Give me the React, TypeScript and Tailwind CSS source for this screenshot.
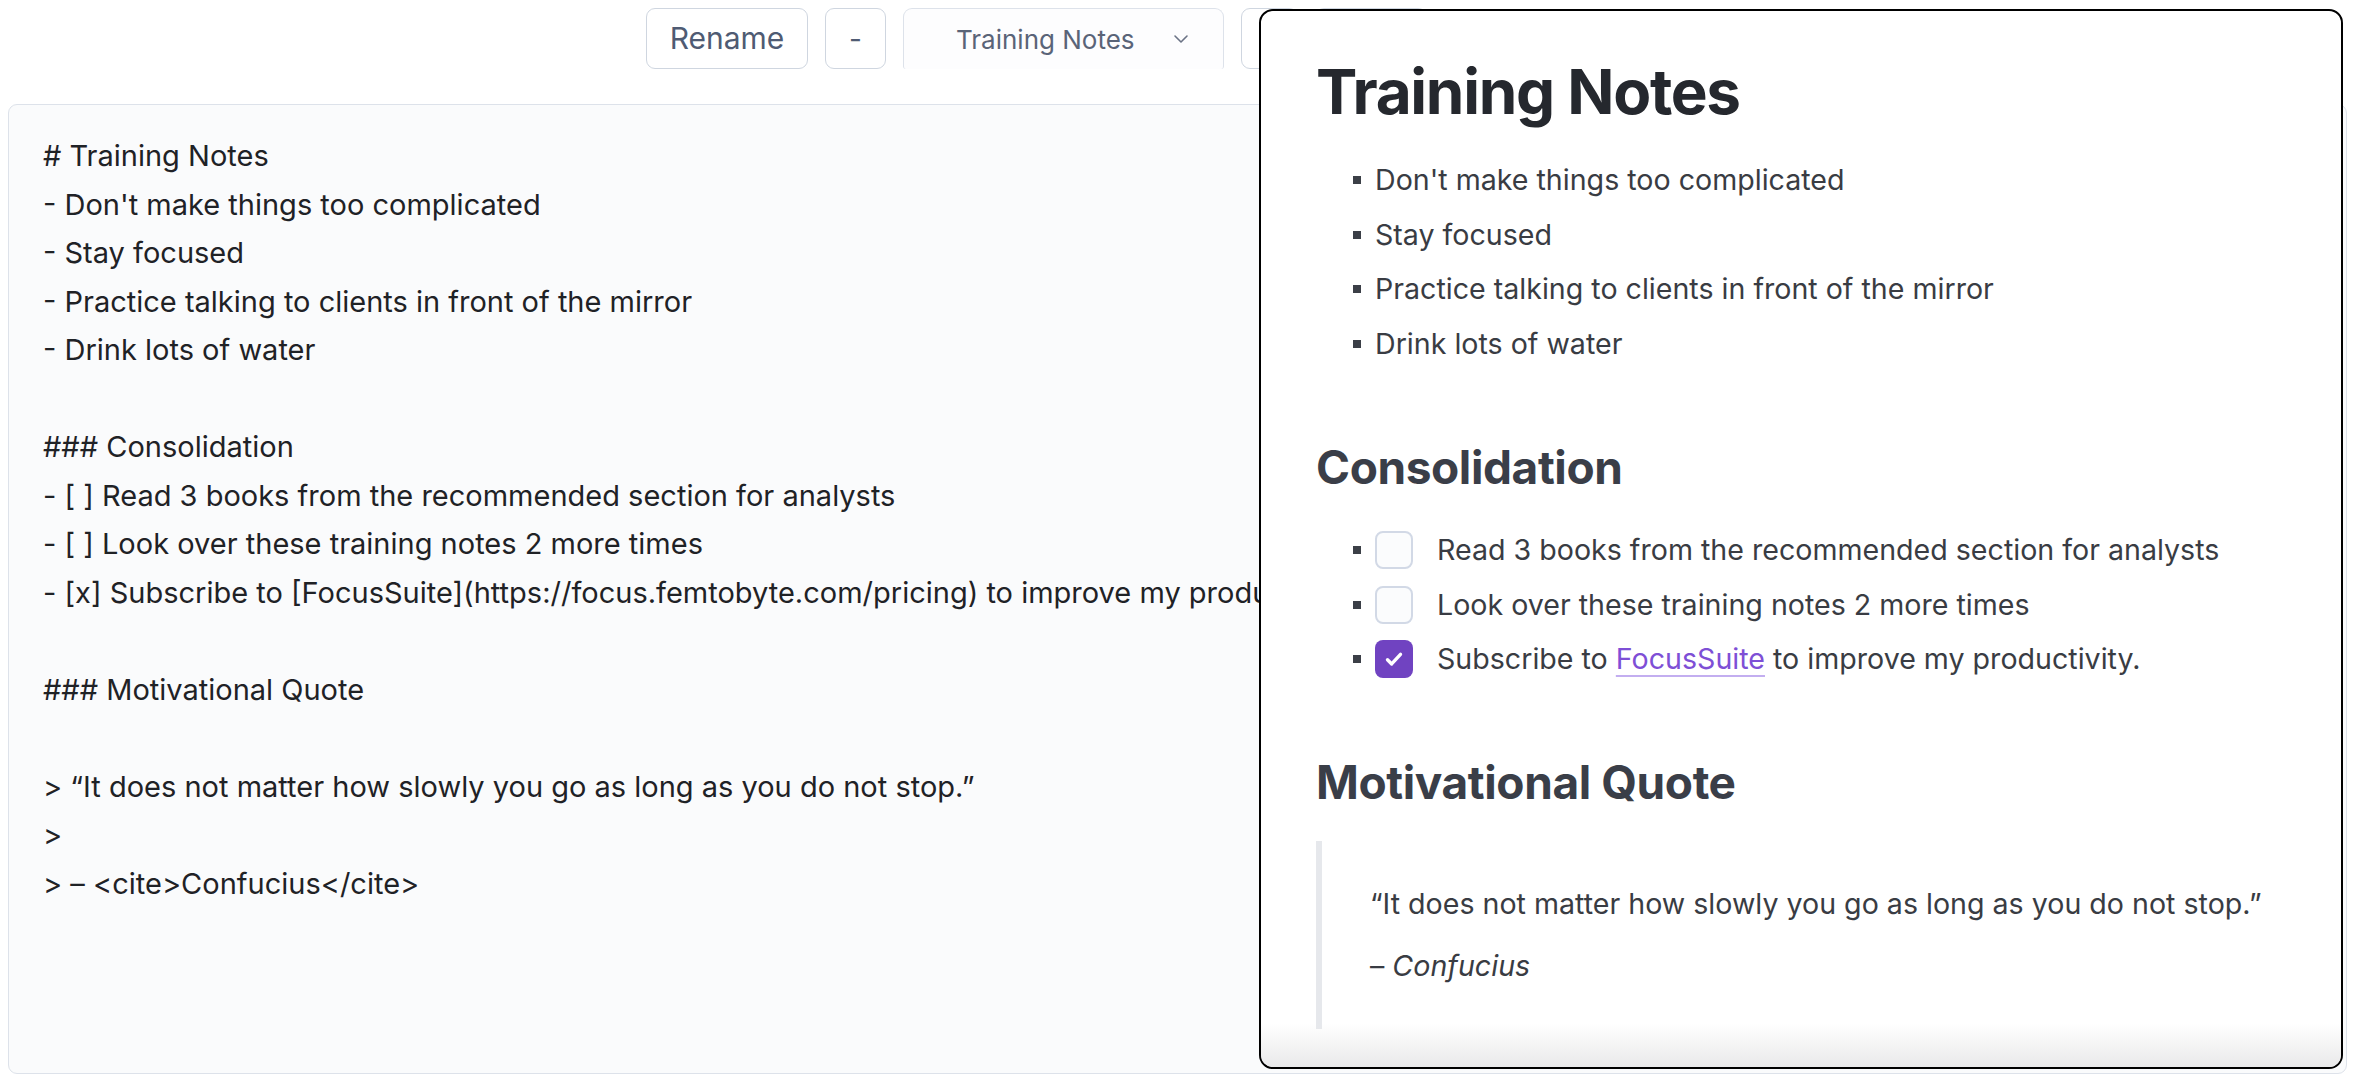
import { ChevronDown } from "lucide-react";

const source = [
  "# Training Notes",
  "- Don't make things too complicated",
  "- Stay focused",
  "- Practice talking to clients in front of the mirror",
  "- Drink lots of water",
  "",
  "### Consolidation",
  "- [ ] Read 3 books from the recommended section for analysts",
  "- [ ] Look over these training notes 2 more times",
  "- [x] Subscribe to [FocusSuite](https://focus.femtobyte.com/pricing) to improve my productivity.",
  "",
  "### Motivational Quote",
  "",
  "> “It does not matter how slowly you go as long as you do not stop.”",
  ">",
  "> – <cite>Confucius</cite>",
];

const notes = [
  "Don't make things too complicated",
  "Stay focused",
  "Practice talking to clients in front of the mirror",
  "Drink lots of water",
];

const Bullet = () => (
  <span className="w-[8px] h-[8px] bg-[#3b3f47] shrink-0" />
);

const Checkbox = ({ checked }: { checked?: boolean }) =>
  checked ? (
    <span className="w-[38px] h-[38px] rounded-[8px] bg-[#7043c1] flex items-center justify-center shrink-0">
      <svg width="26" height="26" viewBox="0 0 20 20" fill="none">
        <path
          d="M5 10.6l3.2 3.2 6.8-7.4"
          stroke="white"
          strokeWidth="2.6"
          strokeLinecap="round"
          strokeLinejoin="round"
        />
      </svg>
    </span>
  ) : (
    <span className="w-[38px] h-[38px] rounded-[8px] border-[2.5px] border-[#d2d9e6] bg-[#fbfcfd] shrink-0" />
  );

const ToolButton = ({ label, className }: { label: string; className?: string }) => (
  <button
    className={`h-[61px] rounded-[9px] border-[1.5px] border-[#cfd6e0] bg-white text-[#4f5b73] flex items-center justify-center ${className ?? ""}`}
  >
    {label}
  </button>
);

export default function App() {
  return (
    <div
      className="relative w-full h-[1080px] bg-white overflow-hidden"
      style={{ fontFamily: "Inter, 'Noto Sans', sans-serif" }}
    >
      <div className="flex gap-[17px] pl-[646px] pt-[8px]">
        <ToolButton label="Rename" className="w-[162px] text-[30px]" />
        <ToolButton label="-" className="w-[61px] text-[28px]" />
        <div className="w-[321px] h-[61px] rounded-t-[9px] rounded-b-[3px] border-[1.5px] border-b-0 border-[#dde2ea] bg-[#fdfdfe] flex items-center pl-[52px] pr-[30px] text-[26px] text-[#5a6478]">
          <span className="flex-1">Training Notes</span>
          <ChevronDown size={24} strokeWidth={1.6} className="text-[#6b7385]" />
        </div>
        <ToolButton label="+" className="w-[57px] text-[28px]" />
        <ToolButton label="Save" className="w-[112px] text-[28px]" />
      </div>

      <div className="mx-[8px] mt-[35px] h-[970px] rounded-[9px] border-[1.5px] border-[#dde2ea] bg-[#fafbfc] overflow-hidden pl-[34px] pt-[27px]">
        <div className="text-[29px] leading-[48.5px] text-[#1f2226]">
          {source.map((line, i) => (
            <div key={i} className="h-[48.5px] whitespace-pre">
              {line}
            </div>
          ))}
        </div>
      </div>

      <div className="absolute left-[1259px] top-[9px] w-[1084px] h-[1060px] rounded-[14px] border-2 border-black bg-white overflow-hidden pl-[55px] pt-[45px]">
        <h1 className="text-[62px] leading-[72px] font-bold text-[#25282e] tracking-[-1.3px]">
          Training Notes
        </h1>

        <ul className="mt-[31px] flex flex-col gap-[12.7px] pl-[37px] text-[28.6px] leading-[42px] text-[#393c43]">
          {notes.map((n) => (
            <li key={n} className="flex items-center gap-[14px]">
              <Bullet />
              {n}
            </li>
          ))}
        </ul>

        <h2 className="mt-[74px] text-[46px] leading-[56px] font-bold text-[#3a3e48] tracking-[-0.4px]">
          Consolidation
        </h2>

        <ul className="mt-[34px] flex flex-col gap-[12.5px] pl-[37px] text-[28.6px] leading-[42px] text-[#393c43]">
          <li className="flex items-center gap-[14px]">
            <Bullet />
            <Checkbox />
            <span className="ml-[10px]">Read 3 books from the recommended section for analysts</span>
          </li>
          <li className="flex items-center gap-[14px]">
            <Bullet />
            <Checkbox />
            <span className="ml-[10px]">Look over these training notes 2 more times</span>
          </li>
          <li className="flex items-center gap-[14px]">
            <Bullet />
            <Checkbox checked />
            <span className="ml-[10px]">
              Subscribe to{" "}
              <a className="text-[#7e4fd6] underline decoration-[#c3aef0] decoration-2 underline-offset-[6px]">
                FocusSuite
              </a>{" "}
              to improve my productivity.
            </span>
          </li>
        </ul>

        <h2 className="mt-[74px] text-[46px] leading-[56px] font-bold text-[#3a3e48] tracking-[-0.4px]">
          Motivational Quote
        </h2>

        <blockquote className="mt-[31px] h-[188px] border-l-[6px] border-[#e6e8ec] pl-[48px] pt-[42px] text-[28.6px] leading-[42px] text-[#393c43]">
          <p>“It does not matter how slowly you go as long as you do not stop.”</p>
          <p className="mt-[20px]">
            – <cite className="italic">Confucius</cite>
          </p>
        </blockquote>

        <div className="absolute left-0 right-0 bottom-0 h-[44px] bg-gradient-to-b from-white/0 to-[#e9e9ea]" />
      </div>
    </div>
  );
}
